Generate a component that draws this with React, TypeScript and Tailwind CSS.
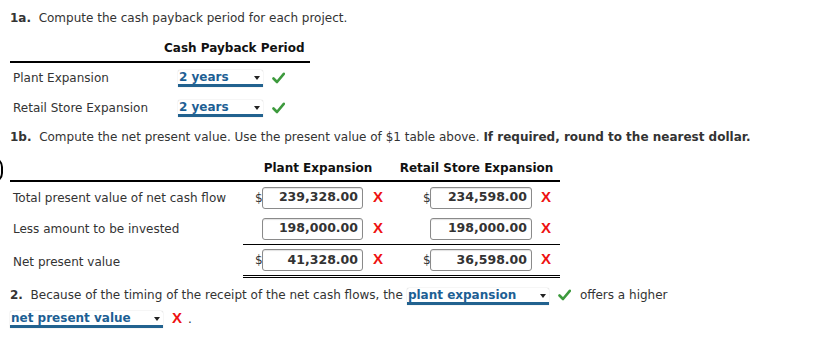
import React from "react";

const font = { fontFamily: '"DejaVu Sans", Verdana, sans-serif' };

function Check() {
  return (
    <svg width="13" height="12" viewBox="0 0 13 12" className="shrink-0">
      <path d="M1.5 6.5 L5 10 L11.8 1.8" fill="none" stroke="#3d9a3d" strokeWidth="2.6" strokeLinecap="round" strokeLinejoin="round" />
    </svg>
  );
}

function Cross() {
  return (
    <span className="text-[15px] font-bold leading-none text-[#ee1111]" style={{ fontFamily: '"Liberation Sans", Arial, sans-serif' }}>
      X
    </span>
  );
}

function Drop({ text, w }: { text: string; w: string }) {
  return (
    <span
      className={`relative inline-flex h-[17px] ${w} items-start rounded-t-[2px] border-b-[3px] border-[#22628f] bg-white pl-[1px] text-[12px] font-bold leading-[14px] text-[#1d5f94] shadow-[0_0_1px_rgba(0,0,0,0.35)]`}
    >
      {text}
      <span className="absolute right-[3px] top-[6px] h-0 w-0 border-x-[3px] border-t-[4px] border-x-transparent border-t-[#222]" />
    </span>
  );
}

function Amount({ v, dollar, w }: { v: string; dollar: boolean; w: string }) {
  return (
    <div className="flex items-center">
      <span className="w-[7px] text-[12px] text-[#333] leading-none">{dollar ? "$" : ""}</span>
      <div
        className={`flex h-[22px] ${w} items-center justify-end rounded-[3px] border border-[#8a8a8a] bg-white pr-[4px] text-[12.5px] font-bold text-[#333] shadow-[inset_0_1px_1px_rgba(0,0,0,0.12)]`}
      >
        {v}
      </div>
    </div>
  );
}

export default function App() {
  return (
    <div className="relative h-[347px] w-[825px] overflow-hidden bg-white pl-[10px] pt-[8px] text-[12px] text-[#333]" style={font}>
      <div className="absolute left-[-17px] top-[157px] h-[26px] w-[20px] rounded-full border-2 border-black" />

      <div className="h-[20px] leading-[20px]">
        <b>1a.</b>&nbsp; Compute the cash payback period for each project.
      </div>

      <div className="mt-[10px] w-[300px]">
        <div className="h-[25px] border-b-2 border-black pl-[154px] font-bold leading-[20px] text-[#111]">Cash Payback Period</div>
        <div className="flex h-[30px] items-center">
          <div className="w-[168px] pl-[3px]">Plant Expansion</div>
          <Drop text="2 years" w="w-[85px]" />
          <span className="ml-[9px]">
            <Check />
          </span>
        </div>
        <div className="flex h-[30px] items-center">
          <div className="w-[168px] pl-[3px]">Retail Store Expansion</div>
          <Drop text="2 years" w="w-[85px]" />
          <span className="ml-[9px]">
            <Check />
          </span>
        </div>
      </div>

      <div className="mt-[4px] h-[20px] leading-[20px]">
        <b>1b.</b>&nbsp; Compute the net present value. Use the present value of $1 table above.{" "}
        <b>If required, round to the nearest dollar.</b>
      </div>

      <div className="mt-[11px] w-[550px]">
        <div className="flex h-[24px] border-b-2 border-black font-bold leading-[20px] text-[#111]">
          <div className="w-[233px]" />
          <div className="w-[150px] text-center">Plant Expansion</div>
          <div className="w-[167px] text-center">Retail Store Expansion</div>
        </div>
        <div className="flex h-[31px] items-center">
          <div className="w-[233px] pl-[3px]">Total present value of net cash flow</div>
          <div className="flex w-[150px] items-center pl-[12px]">
            <Amount v="239,328.00" dollar w="w-[101px]" />
            <span className="ml-[10px]"><Cross /></span>
          </div>
          <div className="flex w-[167px] items-center pl-[30px]">
            <Amount v="234,598.00" dollar w="w-[102px]" />
            <span className="ml-[9px]"><Cross /></span>
          </div>
        </div>
        <div className="flex h-[31px] items-center">
          <div className="w-[233px] pl-[3px]">Less amount to be invested</div>
          <div className="flex w-[150px] items-center pl-[12px]">
            <Amount v="198,000.00" dollar={false} w="w-[101px]" />
            <span className="ml-[10px]"><Cross /></span>
          </div>
          <div className="flex w-[167px] items-center pl-[30px]">
            <Amount v="198,000.00" dollar={false} w="w-[102px]" />
            <span className="ml-[9px]"><Cross /></span>
          </div>
        </div>
        <div className="ml-[233px] h-px bg-black" />
        <div className="flex h-[30px] items-center">
          <div className="w-[233px] pl-[3px] pt-[3px]">Net present value</div>
          <div className="flex w-[150px] items-center pl-[12px]">
            <Amount v="41,328.00" dollar w="w-[101px]" />
            <span className="ml-[10px]"><Cross /></span>
          </div>
          <div className="flex w-[167px] items-center pl-[30px]">
            <Amount v="36,598.00" dollar w="w-[102px]" />
            <span className="ml-[9px]"><Cross /></span>
          </div>
        </div>
        <div className="ml-[233px] h-[3px] border-y border-black" />
      </div>

      <div className="mt-[5px]">
        <div className="flex h-[24px] items-center">
          <span>
            <b>2.</b>&nbsp; Because of the timing of the receipt of the net cash flows, the
          </span>
          <span className="ml-[4px]">
            <Drop text="plant expansion" w="w-[142px]" />
          </span>
          <span className="ml-[9px]">
            <Check />
          </span>
          <span className="ml-[9px]">offers a higher</span>
        </div>
        <div className="flex h-[24px] items-center">
          <Drop text="net present value" w="w-[153px]" />
          <span className="ml-[9px]"><Cross /></span>
          <span className="ml-[6px]">.</span>
        </div>
      </div>
    </div>
  );
}
